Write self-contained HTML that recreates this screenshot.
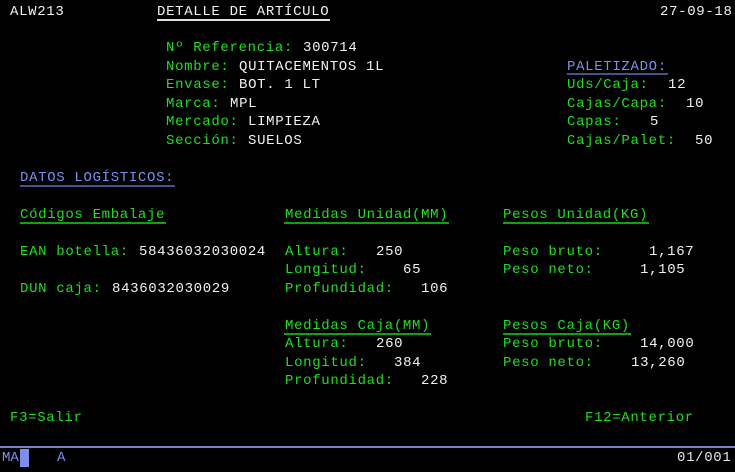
<!DOCTYPE html>
<html><head><meta charset="utf-8"><style>
html,body{margin:0;padding:0;background:#000;}
body{width:735px;height:472px;position:relative;overflow:hidden;}
.t{position:absolute;font-family:"Liberation Mono",monospace;font-size:14px;letter-spacing:0.67px;line-height:16px;white-space:pre;}
.g{color:#1ee01e}.w{color:#f2f2f2}.b{color:#7c8ff0}
.u{position:absolute;height:2px;}
</style></head><body>
<div class="t w" style="left:10px;top:4px">ALW213</div>
<div class="t w" style="left:157px;top:4px">DETALLE DE ARTÍCULO</div>
<div class="u" style="left:157px;top:19px;width:173px;background:#ddd"></div>
<div class="t w" style="left:660px;top:4px">27-09-18</div>

<div class="t g" style="left:166px;top:40px">Nº Referencia:</div><div class="t w" style="left:303px;top:40px">300714</div>
<div class="t g" style="left:166px;top:59px">Nombre:</div><div class="t w" style="left:239px;top:59px">QUITACEMENTOS 1L</div>
<div class="t g" style="left:166px;top:77px">Envase:</div><div class="t w" style="left:239px;top:77px">BOT. 1 LT</div>
<div class="t g" style="left:166px;top:96px">Marca:</div><div class="t w" style="left:230px;top:96px">MPL</div>
<div class="t g" style="left:166px;top:114px">Mercado:</div><div class="t w" style="left:248px;top:114px">LIMPIEZA</div>
<div class="t g" style="left:166px;top:133px">Sección:</div><div class="t w" style="left:248px;top:133px">SUELOS</div>

<div class="t b" style="left:567px;top:59px">PALETIZADO:</div>
<div class="u" style="left:567px;top:73px;width:101px;background:#4a5088"></div>
<div class="t g" style="left:567px;top:77px">Uds/Caja:</div><div class="t w" style="left:668px;top:77px">12</div>
<div class="t g" style="left:567px;top:96px">Cajas/Capa:</div><div class="t w" style="left:686px;top:96px">10</div>
<div class="t g" style="left:567px;top:114px">Capas:</div><div class="t w" style="left:650px;top:114px">5</div>
<div class="t g" style="left:567px;top:133px">Cajas/Palet:</div><div class="t w" style="left:695px;top:133px">50</div>

<div class="t b" style="left:20px;top:170px">DATOS LOGÍSTICOS:</div>
<div class="u" style="left:20px;top:185px;width:155px;background:#4a5088"></div>

<div class="t g" style="left:20px;top:207px">Códigos Embalaje</div>
<div class="u" style="left:20px;top:222px;width:146px;background:#10a010"></div>
<div class="t g" style="left:285px;top:207px">Medidas Unidad(MM)</div>
<div class="u" style="left:284px;top:222px;width:165px;background:#10a010"></div>
<div class="t g" style="left:503px;top:207px">Pesos Unidad(KG)</div>
<div class="u" style="left:503px;top:222px;width:146px;background:#10a010"></div>

<div class="t g" style="left:20px;top:244px">EAN botella:</div><div class="t w" style="left:139px;top:244px">58436032030024</div>
<div class="t g" style="left:285px;top:244px">Altura:</div><div class="t w" style="left:376px;top:244px">250</div>
<div class="t g" style="left:503px;top:244px">Peso bruto:</div><div class="t w" style="left:649px;top:244px">1,167</div>
<div class="t g" style="left:285px;top:262px">Longitud:</div><div class="t w" style="left:403px;top:262px">65</div>
<div class="t g" style="left:503px;top:262px">Peso neto:</div><div class="t w" style="left:640px;top:262px">1,105</div>
<div class="t g" style="left:20px;top:281px">DUN caja:</div><div class="t w" style="left:112px;top:281px">8436032030029</div>
<div class="t g" style="left:285px;top:281px">Profundidad:</div><div class="t w" style="left:421px;top:281px">106</div>

<div class="t g" style="left:285px;top:318px">Medidas Caja(MM)</div>
<div class="u" style="left:284px;top:333px;width:147px;background:#10a010"></div>
<div class="t g" style="left:503px;top:318px">Pesos Caja(KG)</div>
<div class="u" style="left:503px;top:333px;width:128px;background:#10a010"></div>
<div class="t g" style="left:285px;top:336px">Altura:</div><div class="t w" style="left:376px;top:336px">260</div>
<div class="t g" style="left:503px;top:336px">Peso bruto:</div><div class="t w" style="left:640px;top:336px">14,000</div>
<div class="t g" style="left:285px;top:355px">Longitud:</div><div class="t w" style="left:394px;top:355px">384</div>
<div class="t g" style="left:503px;top:355px">Peso neto:</div><div class="t w" style="left:631px;top:355px">13,260</div>
<div class="t g" style="left:285px;top:373px">Profundidad:</div><div class="t w" style="left:421px;top:373px">228</div>

<div class="t g" style="left:10px;top:410px">F3=Salir</div>
<div class="t g" style="left:585px;top:410px">F12=Anterior</div>

<div class="u" style="left:0;top:446px;width:735px;background:#7880d0"></div>
<div class="t b" style="left:2px;top:450px;letter-spacing:0px">MA</div>
<div class="u" style="left:20px;top:449px;width:9px;height:18px;background:#7c8ff0"></div>
<div class="t b" style="left:57px;top:450px">A</div>
<div class="t w" style="left:677px;top:450px;color:#e8e8e8">01/001</div>
</body></html>
